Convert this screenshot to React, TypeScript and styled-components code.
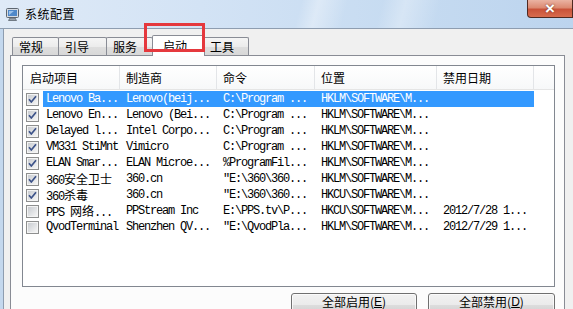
import styled, { createGlobalStyle } from 'styled-components'

type Item = {
  on: boolean
  name: string
  maker: string
  cmd: string
  place: string
  date: string
}

const items: Item[] = [
  { on: true, name: 'Lenovo Ba...', maker: 'Lenovo(beij...', cmd: 'C:\\Program ...', place: 'HKLM\\SOFTWARE\\M...', date: '' },
  { on: true, name: 'Lenovo En...', maker: 'Lenovo (Bei...', cmd: 'C:\\Program ...', place: 'HKLM\\SOFTWARE\\M...', date: '' },
  { on: true, name: 'Delayed l...', maker: 'Intel Corpo...', cmd: 'C:\\Program ...', place: 'HKLM\\SOFTWARE\\M...', date: '' },
  { on: true, name: 'VM331 StiMnt', maker: 'Vimicro', cmd: 'C:\\Program ...', place: 'HKLM\\SOFTWARE\\M...', date: '' },
  { on: true, name: 'ELAN Smar...', maker: 'ELAN Microe...', cmd: '%ProgramFil...', place: 'HKLM\\SOFTWARE\\M...', date: '' },
  { on: true, name: '360安全卫士', maker: '360.cn', cmd: '"E:\\360\\360...', place: 'HKLM\\SOFTWARE\\M...', date: '' },
  { on: true, name: '360杀毒', maker: '360.cn', cmd: '"E:\\360\\360...', place: 'HKCU\\SOFTWARE\\M...', date: '' },
  { on: false, name: 'PPS 网络...', maker: 'PPStream Inc', cmd: 'E:\\PPS.tv\\P...', place: 'HKCU\\SOFTWARE\\M...', date: '2012/7/28 1...' },
  { on: false, name: 'QvodTerminal', maker: 'Shenzhen QV...', cmd: '"E:\\QvodPla...', place: 'HKLM\\SOFTWARE\\M...', date: '2012/7/29 1...' },
]

const tabs = [
  { label: '常规', w: 47 },
  { label: '引导', w: 49 },
  { label: '服务', w: 47 },
  { label: '启动', w: 53, active: true },
  { label: '工具', w: 46 },
]

const headers = ['启动项目', '制造商', '命令', '位置', '禁用日期']

// wraps the CJK runs so they keep their own width in the mono text
const renderText = (text: string) =>
  text.split(/([\u4e00-\u9fff]+)/).map((part, i) =>
    /[\u4e00-\u9fff]/.test(part) ? <Cjk key={i}>{part}</Cjk> : part
  )

const TitleIcon = () => (
  <svg width="15" height="15" viewBox="0 0 15 15">
    <rect x="1.5" y="1.5" width="12" height="9" rx="1" fill="#d6dbe2" stroke="#5d6670" />
    <rect x="3" y="3" width="9" height="6" fill="#4f88c9" />
    <path d="M4 4 L9 4 L4 8 Z" fill="#9cc3ec" />
    <path d="M5 11 L10 11 L11.5 13.5 L3.5 13.5 Z" fill="#9aa3ad" stroke="#5d6670" strokeWidth="0.8" />
  </svg>
)

const CheckBox = ({ on }: { on: boolean }) => (
  <svg width="13" height="13" viewBox="0 0 13 13">
    <defs>
      <linearGradient id="cbFill" x1="0" y1="0" x2="1" y2="1">
        <stop offset="0" stopColor="#c9ccd1" />
        <stop offset="1" stopColor="#f5f5f5" />
      </linearGradient>
    </defs>
    <rect x="0.5" y="0.5" width="12" height="12" fill="#f4f4f4" stroke="#8e8f8f" />
    <rect x="2" y="2" width="9" height="9" fill="url(#cbFill)" />
    {on && (
      <path d="M3 6.3 L5.3 9 L10 3.2" fill="none" stroke="#3c5289" strokeWidth="1.7" strokeLinejoin="round" />
    )}
  </svg>
)

const App = () => {
  return (
    <Window>
      <GlobalStyle />
      <TitleBar>
        <TitleIcon />
        <TitleText>系统配置</TitleText>
        <CloseButton>×</CloseButton>
      </TitleBar>
      <Client>
        <TabStrip>
          {tabs.map((t) => (
            <Tab key={t.label} $w={t.w} $active={!!t.active}>
              {t.label}
            </Tab>
          ))}
        </TabStrip>
        <Panel>
          <List>
            <HeaderRow>
              {headers.map((h, i) => (
                <HeaderCell key={h} $first={i === 0}>
                  {h}
                </HeaderCell>
              ))}
              <HeaderFiller />
            </HeaderRow>
            {items.map((it, i) => {
              const sel = i === 0
              return (
                <Row key={i}>
                  <FirstCell>
                    <CheckBox on={it.on} />
                    <Label $sel={sel}>{renderText(it.name)}</Label>
                  </FirstCell>
                  <Cell $sel={sel}>{it.maker}</Cell>
                  <Cell $sel={sel}>{it.cmd}</Cell>
                  <Cell $sel={sel}>{it.place}</Cell>
                  <Cell $sel={sel}>{it.date}</Cell>
                  <span />
                </Row>
              )
            })}
          </List>
          <ButtonRow>
            <Button $w={126}>
              全部启用(<u>E</u>)
            </Button>
            <Button $w={127}>
              全部禁用(<u>D</u>)
            </Button>
          </ButtonRow>
        </Panel>
      </Client>
      <Marker />
    </Window>
  )
}

export default App

const GlobalStyle = createGlobalStyle`
  html, body {
    margin: 0;
    padding: 0;
    overflow: hidden;
    background: #f0f0f0;
  }
  * {
    box-sizing: border-box;
  }
`

const cjkFont = `"Noto Sans CJK SC", "Liberation Sans", sans-serif`
const monoFont = `"Liberation Mono", "Noto Sans CJK SC", monospace`
const grid = `97px 97px 98px 122px 97px 1fr`

const Window = styled.div`
  position: relative;
  width: 573px;
  height: 309px;
  overflow: hidden;
  display: flex;
  flex-direction: column;
  background: #c4d8ee;
  font-family: ${cjkFont};
  font-size: 12px;
  color: #000;
`

const TitleBar = styled.div`
  height: 29px;
  flex: none;
  display: flex;
  align-items: center;
  padding-left: 5px;
  border-bottom: 1px solid #8e9db0;
  background:
    linear-gradient(105deg, transparent 0 52%, rgba(255, 255, 255, 0.35) 55%, transparent 60%,
      transparent 66%, rgba(255, 255, 255, 0.3) 70%, transparent 76%),
    linear-gradient(90deg, #dfeaf7 0%, #d3e3f5 35%, #c6dbf1 70%, #bcd4ee 100%);
`

const TitleText = styled.span`
  margin-left: 5px;
  font-size: 12px;
  line-height: 14px;
  letter-spacing: 0.5px;
`

const CloseButton = styled.div`
  margin-left: auto;
  align-self: flex-start;
  width: 46px;
  height: 18px;
  border: 1px solid #4f2a22;
  border-top: none;
  border-radius: 0 0 0 4px;
  display: flex;
  align-items: center;
  justify-content: center;
  color: #fff;
  font-family: "Liberation Sans", sans-serif;
  font-weight: bold;
  font-size: 17px;
  line-height: 1;
  text-shadow: 0 0 2px #6b2a1a;
  background: linear-gradient(#eab3a3 0%, #dc8a72 45%, #c9533a 55%, #d86c4e 100%);
`

const Client = styled.div`
  flex: 1;
  margin-left: 3px;
  border-left: 1px solid #8e9db0;
  background: #f0f0f0;
  display: flex;
  flex-direction: column;
  overflow: hidden;
`

const TabStrip = styled.div`
  height: 26px;
  flex: none;
  display: flex;
  align-items: flex-end;
  padding-left: 8px;
`

const Tab = styled.div<{ $w: number; $active: boolean }>`
  width: ${(p) => p.$w}px;
  height: ${(p) => (p.$active ? 21 : 18)}px;
  margin: 0 ${(p) => (p.$active ? -2 : -1)}px ${(p) => (p.$active ? -1 : 0)}px 0;
  position: relative;
  z-index: ${(p) => (p.$active ? 2 : 1)};
  border: 1px solid #898c95;
  border-bottom: none;
  border-radius: 2px 2px 0 0;
  padding: ${(p) => (p.$active ? '2px 0 0 10px' : '1px 0 0 6px')};
  line-height: 15px;
  background: ${(p) =>
    p.$active ? '#ffffff' : 'linear-gradient(#f5f5f5 0%, #ececec 50%, #dedede 52%, #d8d8d8 100%)'};
`

// red annotation frame drawn over the selected tab
const Marker = styled.div`
  position: absolute;
  left: 144px;
  top: 23px;
  width: 61px;
  height: 29px;
  border: 3px solid #e5383d;
  pointer-events: none;
  z-index: 5;
`

const Panel = styled.div`
  flex: 1;
  margin: 0 8px 0 6px;
  border: 1px solid #898c95;
  background: #fcfcfc;
  padding: 9px 0 0 11px;
`

const List = styled.div`
  width: 533px;
  height: 222px;
  border: 1px solid #828790;
  background: #fff;
`

const HeaderRow = styled.div`
  display: grid;
  grid-template-columns: ${grid};
  height: 24px;
  border-bottom: 1px solid #e5e5e5;
  background: linear-gradient(#ffffff, #f7f8f9);
  margin-bottom: 1px;
`

const HeaderCell = styled.div<{ $first: boolean }>`
  padding: 4px 0 0 ${(p) => (p.$first ? 7 : 6)}px;
  border-right: 1px solid #e3e5e8;
  line-height: 16px;
  white-space: nowrap;
`

const HeaderFiller = styled.div``

const Row = styled.div`
  display: grid;
  grid-template-columns: ${grid};
  height: 16px;
  font-family: ${monoFont};
  font-size: 12px;
  letter-spacing: -1.2px;
  line-height: 16px;
`

const FirstCell = styled.div`
  display: flex;
  align-items: center;
  padding-left: 3px;
  overflow: hidden;
`

const Cell = styled.div<{ $sel?: boolean }>`
  padding-left: 6px;
  white-space: nowrap;
  overflow: hidden;
  background: ${(p) => (p.$sel ? '#3399ff' : 'transparent')};
  color: ${(p) => (p.$sel ? '#ffffff' : '#000000')};
`

const Label = styled(Cell)`
  flex: 1;
  height: 16px;
  margin-left: 4px;
  padding-left: 3px;
`

const Cjk = styled.span`
  font-family: ${cjkFont};
  letter-spacing: 0;
`

const ButtonRow = styled.div`
  width: 533px;
  margin-top: 6px;
  display: flex;
  justify-content: flex-end;
  gap: 11px;
`

const Button = styled.div<{ $w: number }>`
  width: ${(p) => p.$w}px;
  height: 23px;
  border: 1px solid #707070;
  border-radius: 3px;
  display: flex;
  align-items: flex-start;
  justify-content: center;
  padding-top: 1px;
  line-height: 14px;
  background: linear-gradient(#f2f2f2 0%, #ebebeb 50%, #dddddd 51%, #cfcfcf 100%);
  box-shadow: inset 0 0 0 1px rgba(255, 255, 255, 0.7);

  u {
    text-decoration: underline;
    font-family: "Liberation Sans", sans-serif;
  }
`
